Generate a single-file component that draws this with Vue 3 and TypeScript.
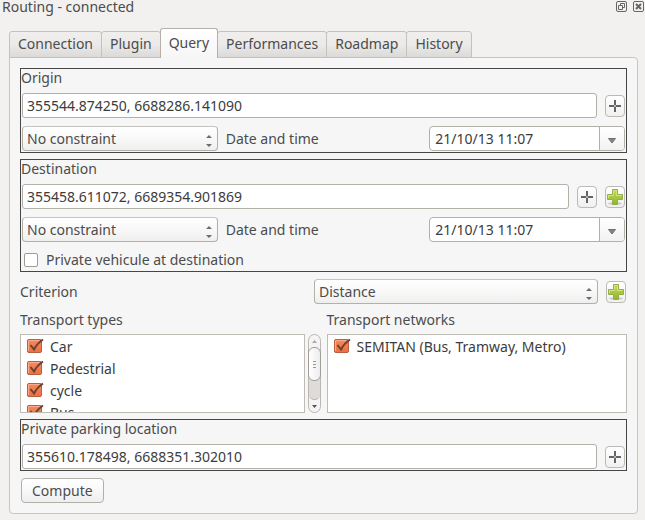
<script setup lang="ts">
import { reactive, ref } from 'vue'

interface Choice {
  label: string
  checked: boolean
}

const tabs: string[] = ['Connection', 'Plugin', 'Query', 'Performances', 'Roadmap', 'History']
const activeTab = ref('Query')

const constraints: string[] = ['No constraint', 'Leave before', 'Arrive before']
const criteria: string[] = ['Distance', 'Duration']

const origin = reactive({ position: '355544.874250, 6688286.141090', constraint: 'No constraint', date: '21/10/13 11:07' })
const destination = reactive({
  position: '355458.611072, 6689354.901869',
  constraint: 'No constraint',
  date: '21/10/13 11:07',
  privateVehicle: false,
})
const criterion = ref('Distance')
const parking = ref('355610.178498, 6688351.302010')

const transportTypes = reactive<Choice[]>([
  { label: 'Car', checked: true },
  { label: 'Pedestrial', checked: true },
  { label: 'cycle', checked: true },
  { label: 'Bus', checked: true },
])
const networks = reactive<Choice[]>([{ label: 'SEMITAN (Bus, Tramway, Metro)', checked: true }])

const typeList = ref<HTMLElement | null>(null)
function scrollTypes(step: number): void {
  typeList.value?.scrollBy({ top: step })
}
</script>

<template>
  <main class="dock">
    <svg class="defs" width="0" height="0" aria-hidden="true">
      <defs>
        <linearGradient id="green" x1="0" y1="0" x2="0" y2="1">
          <stop offset="0" stop-color="#c5dc55" />
          <stop offset="1" stop-color="#8fb52a" />
        </linearGradient>
        <linearGradient id="orange" x1="0" y1="0" x2="0" y2="1">
          <stop offset="0" stop-color="#f6895f" />
          <stop offset="1" stop-color="#ee6f40" />
        </linearGradient>
        <symbol id="cross" viewBox="0 0 12 12">
          <path d="M6 0v12M0 6h12" stroke="#646464" stroke-width="2" />
          <path d="M5 6h2" stroke="#b4b4b4" stroke-width="2" />
        </symbol>
        <symbol id="plus" viewBox="0 0 16 16">
          <ellipse cx="8" cy="14.4" rx="7" ry="1.4" fill="#ccc" />
          <path d="M5.5 .5h5v5h5v5h-5v5h-5v-5h-5v-5h5z" fill="url(#green)" stroke="#93ae4e" />
          <path d="M6.5 5.500v-4h3v5h5M1.500 9v-2.500h5" fill="none" stroke="#d3e57c" />
        </symbol>
        <symbol id="tick" viewBox="0 0 17 16">
          <rect x=".5" y="1.5" width="14" height="13" rx="1.5" fill="url(#orange)" stroke="#b9603f" />
          <path d="M1.5 13V2.5H13" fill="none" stroke="#fbab8b" />
          <path d="M3.5 7L7 11.5Q10 5.500 16 1.500" fill="none" stroke="#6b4232" stroke-width="2" />
        </symbol>
        <symbol id="updown" viewBox="0 0 6 12">
          <path d="M0 3L3 0l3 3zM0 9h6l-3 3z" fill="#6c6c6c" />
        </symbol>
      </defs>
    </svg>

    <header class="titlebar">
      <h1>Routing - connected</h1>
      <button type="button" class="window-button" aria-label="Float">
        <svg width="11" height="11" viewBox="0 0 11 11" fill="none" stroke="#666">
          <rect x=".5" y=".5" width="10" height="10" rx="1.500" />
          <path d="M4.500 4V2.500h4v4H7M2.500 4.500h4v4h-4z" />
        </svg>
      </button>
      <button type="button" class="window-button" aria-label="Close">
        <svg width="11" height="11" viewBox="0 0 11 11" fill="none" stroke="#666">
          <rect x=".5" y=".5" width="10" height="10" rx="1.500" />
          <path d="M3 3l5 5M8 3l-5 5" stroke-width="2" />
        </svg>
      </button>
    </header>

    <nav class="tabs" role="tablist">
      <button
        v-for="tab in tabs"
        :key="tab"
        type="button"
        role="tab"
        class="tab"
        :class="{ active: tab === activeTab }"
        :aria-selected="tab === activeTab"
        @click="activeTab = tab"
      >{{ tab }}</button>
    </nav>

    <form class="panel" @submit.prevent>
      <section class="frame">
        <label class="caption" for="origin">Origin</label>
        <div class="line">
          <input id="origin" v-model="origin.position" class="field" type="text" />
          <button type="button" class="tool" aria-label="Pick origin"><svg width="12" height="12"><use href="#cross" /></svg></button>
        </div>
        <div class="thirds">
          <span class="combo">
            <select v-model="origin.constraint" aria-label="Origin constraint">
              <option v-for="c in constraints" :key="c">{{ c }}</option>
            </select>
            <svg class="arrows" width="6" height="12"><use href="#updown" /></svg>
          </span>
          <label for="origin-date">Date and time</label>
          <span class="date">
            <input id="origin-date" v-model="origin.date" type="text" />
            <button type="button" aria-label="Open calendar"><svg width="8" height="6" viewBox="0 0 8 6"><path d="M.5 .5h7L4 5z" fill="#858585" stroke="#707070" /></svg></button>
          </span>
        </div>
      </section>

      <section class="frame">
        <label class="caption" for="destination">Destination</label>
        <div class="line">
          <input id="destination" v-model="destination.position" class="field" type="text" />
          <button type="button" class="tool" aria-label="Pick destination"><svg width="12" height="12"><use href="#cross" /></svg></button>
          <button type="button" class="tool" aria-label="Add destination"><svg width="16" height="16"><use href="#plus" /></svg></button>
        </div>
        <div class="thirds">
          <span class="combo">
            <select v-model="destination.constraint" aria-label="Destination constraint">
              <option v-for="c in constraints" :key="c">{{ c }}</option>
            </select>
            <svg class="arrows" width="6" height="12"><use href="#updown" /></svg>
          </span>
          <label for="destination-date">Date and time</label>
          <span class="date">
            <input id="destination-date" v-model="destination.date" type="text" />
            <button type="button" aria-label="Open calendar"><svg width="8" height="6" viewBox="0 0 8 6"><path d="M.5 .5h7L4 5z" fill="#858585" stroke="#707070" /></svg></button>
          </span>
        </div>
        <label class="check private">
          <span class="box">
            <input v-model="destination.privateVehicle" type="checkbox" />
            <svg v-if="destination.privateVehicle" width="17" height="16"><use href="#tick" /></svg>
          </span>
          Private vehicule at destination
        </label>
      </section>

      <div class="criterion">
        <label for="criterion">Criterion</label>
        <span class="combo">
          <select id="criterion" v-model="criterion">
            <option v-for="c in criteria" :key="c">{{ c }}</option>
          </select>
          <svg class="arrows" width="6" height="12"><use href="#updown" /></svg>
        </span>
        <button type="button" class="tool" aria-label="Add criterion"><svg width="16" height="16"><use href="#plus" /></svg></button>
      </div>

      <div class="halves">
        <section>
          <h2>Transport types</h2>
          <div class="scroller">
            <ul ref="typeList" class="list">
              <li v-for="item in transportTypes" :key="item.label">
                <label class="check">
                  <span class="box">
                    <input v-model="item.checked" type="checkbox" />
                    <svg v-if="item.checked" width="17" height="16"><use href="#tick" /></svg>
                  </span>
                  <span class="name">{{ item.label }}</span>
                </label>
              </li>
            </ul>
            <div class="scrollbar">
              <button type="button" aria-label="Scroll up" @click="scrollTypes(-22)"><svg width="5" height="3" viewBox="0 0 5 3"><path d="M0 3L2.500 0 5 3z" fill="#aaa" /></svg></button>
              <span class="thumb"><i></i><i></i><i></i></span>
              <span class="trough"></span>
              <button type="button" aria-label="Scroll down" @click="scrollTypes(22)"><svg width="5" height="3" viewBox="0 0 5 3"><path d="M0 0h5L2.500 3z" fill="#555" /></svg></button>
            </div>
          </div>
        </section>
        <section>
          <h2>Transport networks</h2>
          <ul class="list">
            <li v-for="item in networks" :key="item.label">
              <label class="check">
                <span class="box">
                  <input v-model="item.checked" type="checkbox" />
                  <svg v-if="item.checked" width="17" height="16"><use href="#tick" /></svg>
                </span>
                <span class="name">{{ item.label }}</span>
              </label>
            </li>
          </ul>
        </section>
      </div>

      <section class="frame">
        <label class="caption" for="parking">Private parking location</label>
        <div class="line">
          <input id="parking" v-model="parking" class="field" type="text" />
          <button type="button" class="tool" aria-label="Pick parking"><svg width="12" height="12"><use href="#cross" /></svg></button>
        </div>
      </section>

      <button type="submit" class="compute">Compute</button>
    </form>
  </main>
</template>

<style>
body {
  margin: 0;
  background: #f2f1f0;
}
</style>

<style scoped>
.dock {
  min-height: 100vh;
  box-sizing: border-box;
  padding: 0 7px 5px 9px;
  background: #f2f1f0;
  color: #4c4c4c;
  font: 14px/20px 'Noto Sans', 'Open Sans', sans-serif;
}
.dock * {
  box-sizing: border-box;
}
.defs {
  position: absolute;
}
svg {
  display: block;
}
button,
input,
select {
  margin: 0;
  padding: 0;
  color: inherit;
  font: inherit;
}
h1,
h2 {
  margin: 0;
  font: inherit;
}
.titlebar {
  display: flex;
  align-items: flex-start;
  gap: 6px;
  height: 28px;
  margin: 0 -6px 0 -7px;
}
.titlebar h1 {
  flex: 1;
  line-height: 14px;
}
.window-button {
  padding: 1px 0 0;
  border: 0;
  background: none;
}
.tabs {
  display: flex;
  align-items: flex-end;
  height: 30px;
  position: relative;
  z-index: 1;
}
.tab {
  height: 27px;
  margin-right: -1px;
  padding: 0 8px 2px;
  border: 1px solid #c4c0bc;
  border-radius: 3px 3px 0 0;
  background: linear-gradient(#f0efee, #ebeae9 50%, #dbdad8);
}
.tab.active {
  height: 30px;
  padding-bottom: 1px;
  border-color: #b5b0aa;
  border-bottom: 0;
  background: linear-gradient(#fff, #f6f6f6);
  position: relative;
}
.panel {
  display: flex;
  flex-direction: column;
  margin-top: -1px;
  padding: 10px;
  border: 1px solid #c8c4c0;
  border-radius: 0 4px 4px 4px;
  background: #f6f6f6;
}
.frame {
  display: flex;
  flex-direction: column;
  padding: 0 1px 1px;
  border: 1px solid #474747;
}
.frame + .frame,
.halves + .frame {
  margin-top: 6px;
}
.caption {
  height: 24px;
  margin-left: -1px;
  line-height: 18px;
}
.line {
  display: flex;
  align-items: center;
  gap: 8px;
}
.field {
  flex: 1;
  min-width: 0;
  height: 25px;
  padding: 0 4px;
  border: 1px solid #b3afa9;
  border-radius: 3px;
  background: #fff;
  color: #3c3c3c;
}
.tool {
  display: grid;
  place-items: center;
  flex: none;
  width: 20px;
  height: 22px;
  border: 1px solid #bdb9b4;
  border-radius: 4px;
  background: linear-gradient(#fff, #f0f0f0);
}
.thirds {
  display: grid;
  grid-template-columns: repeat(3, 1fr);
  align-items: center;
  gap: 8px;
  margin-top: 8px;
}
.combo {
  display: grid;
  position: relative;
}
.combo select {
  appearance: none;
  width: 100%;
  height: 25px;
  padding: 1px 20px 0 4px;
  border: 1px solid #b3afa9;
  border-top-color: #c6c3be;
  border-radius: 4px;
  background: linear-gradient(#fff, #f8f8f8 50%, #efefee);
}
.arrows {
  position: absolute;
  right: 6px;
  top: 9px;
  pointer-events: none;
}
.date {
  display: flex;
  height: 25px;
  border: 1px solid #b3afa9;
  border-radius: 4px;
  background: #fff;
  overflow: hidden;
}
.date input {
  flex: 1;
  min-width: 0;
  padding: 1px 5px 0;
  border: 0;
  background: none;
  color: #3c3c3c;
}
.date button {
  display: grid;
  place-items: center;
  width: 25px;
  padding-top: 4px;
  border: 0;
  border-left: 1px solid #b3afa9;
  background: linear-gradient(#fff, #f2f2f2);
}
.check {
  display: flex;
  align-items: center;
  height: 22px;
  gap: 8px;
}
.box {
  display: block;
  position: relative;
  width: 14px;
  height: 14px;
}
.box input {
  display: block;
  appearance: none;
  width: 14px;
  height: 14px;
  border: 1px solid #a09b95;
  border-radius: 2px;
  background: #fff;
}
.box svg {
  position: absolute;
  left: 0;
  top: -1px;
  pointer-events: none;
}
.private {
  height: 20px;
  margin: 8px 0 0 2px;
}
.criterion {
  display: grid;
  grid-template-columns: 1fr 284px 20px;
  align-items: center;
  column-gap: 8px;
  margin: 7px 1px 0 0;
}
.halves {
  display: grid;
  grid-template-columns: 1fr 1fr;
  gap: 6px;
}
h2 {
  height: 30px;
  line-height: 32px;
}
.scroller {
  display: grid;
  grid-template-columns: 1fr 13px;
  gap: 3px;
}
.list {
  height: 79px;
  margin: 0;
  padding: 0 6px;
  overflow: hidden;
  border: 1px solid #bfbcb6;
  background: #fff;
  color: #3c3c3c;
  list-style: none;
}
.list .check {
  gap: 9px;
}
.name {
  padding-top: 2px;
}
.scrollbar {
  display: flex;
  flex-direction: column;
  border: 1px solid #bab6b1;
  border-radius: 7px;
  background: #f4f4f4;
}
.scrollbar button {
  display: grid;
  place-items: center;
  height: 12px;
  border: 0;
  background: none;
}
.thumb {
  display: flex;
  flex-direction: column;
  align-items: center;
  justify-content: center;
  gap: 2px;
  position: relative;
  z-index: 1;
  height: 34px;
  margin: 0 -1px;
  border: 1px solid #a19d98;
  border-radius: 6px;
  background: linear-gradient(90deg, #fff, #ededed);
}
.thumb i {
  width: 3px;
  height: 1px;
  background: #999;
}
.trough {
  flex: 1;
  margin-top: -6px;
  border-bottom: 1px solid #bab6b1;
  border-radius: 0 0 6px 6px;
  background: #dedbd9;
}
.compute {
  align-self: flex-start;
  height: 25px;
  margin: 7px 0 0 1px;
  padding: 0 10px;
  border: 1px solid #b3afa9;
  border-radius: 4px;
  background: linear-gradient(#fff, #f8f8f8 50%, #eee);
}
</style>
